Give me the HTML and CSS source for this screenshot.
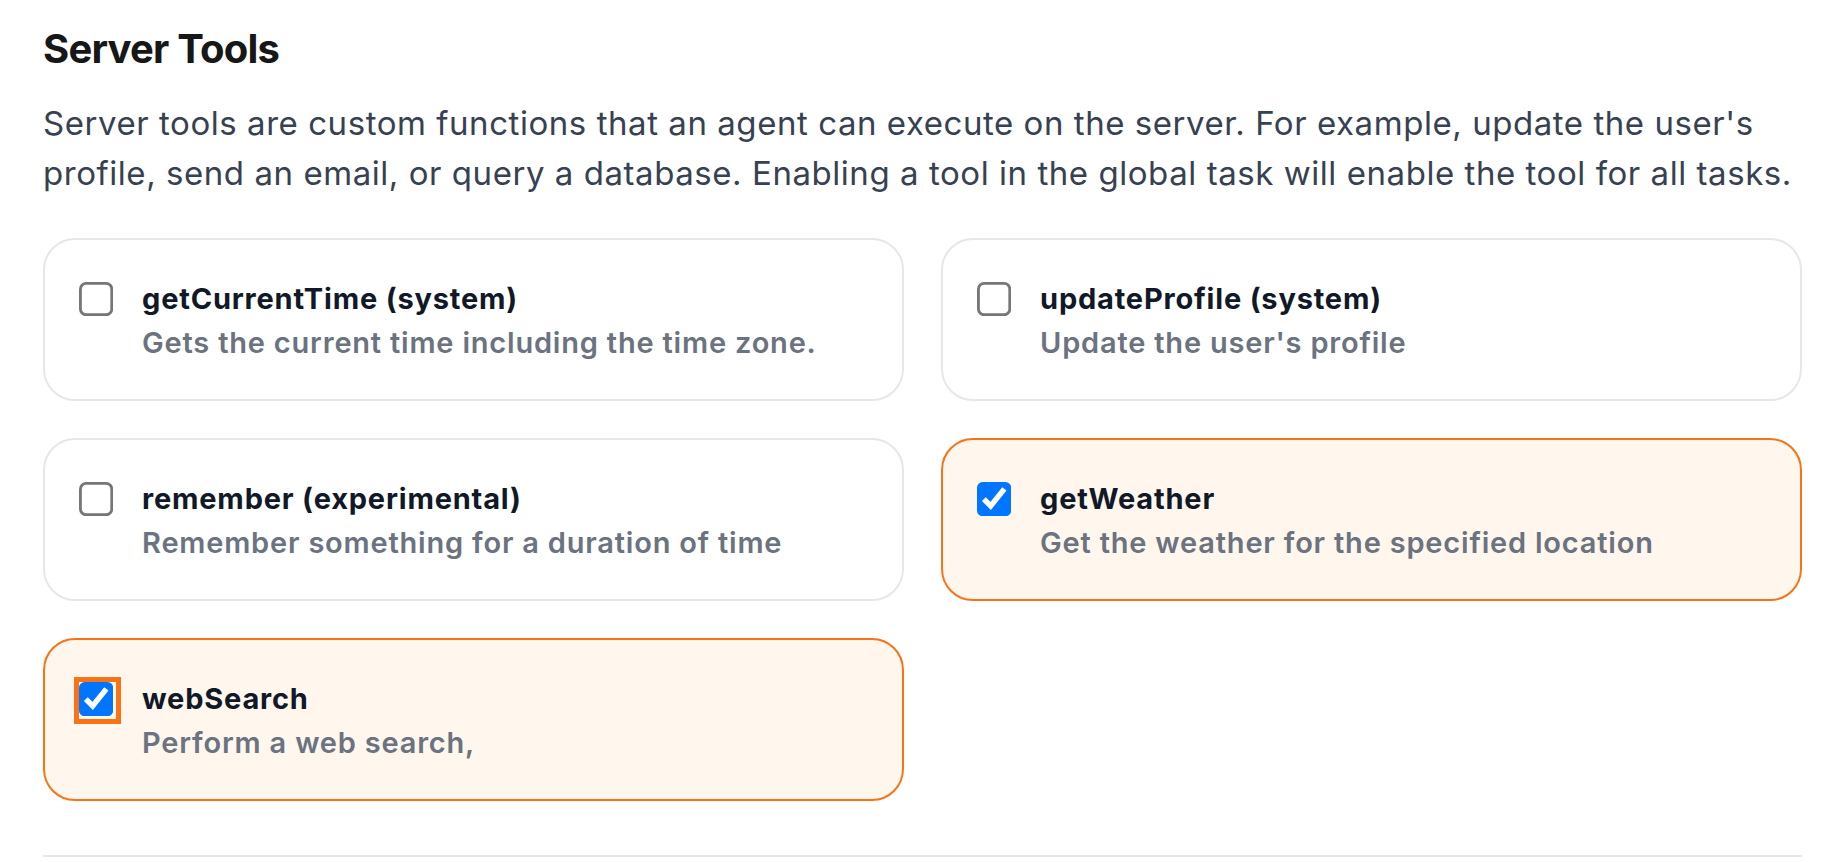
FILE: index.html
```html
<!DOCTYPE html>
<html lang="en">
<head>
<meta charset="utf-8">
<title>Server Tools</title>
<link rel="stylesheet" href="styles.css">
</head>
<body>
<section class="tools">
  <h2 class="tools-title">Server Tools</h2>
  <p class="tools-lead">Server tools are custom functions that an agent can execute on the server. For example, update the user's profile, send an email, or query a database. Enabling a tool in the global task will enable the tool for all tasks.</p>
  <div class="tool-grid">
    <label class="tool-card">
      <input type="checkbox" class="tool-check">
      <span class="tool-text">
        <span class="tool-name">getCurrentTime (system)</span>
        <span class="tool-desc">Gets the current time including the time zone.</span>
      </span>
    </label>
    <label class="tool-card">
      <input type="checkbox" class="tool-check">
      <span class="tool-text">
        <span class="tool-name">updateProfile (system)</span>
        <span class="tool-desc">Update the user's profile</span>
      </span>
    </label>
    <label class="tool-card">
      <input type="checkbox" class="tool-check">
      <span class="tool-text">
        <span class="tool-name">remember (experimental)</span>
        <span class="tool-desc">Remember something for a duration of time</span>
      </span>
    </label>
    <label class="tool-card is-on">
      <input type="checkbox" class="tool-check" checked>
      <span class="tool-text">
        <span class="tool-name">getWeather</span>
        <span class="tool-desc">Get the weather for the specified location</span>
      </span>
    </label>
    <label class="tool-card is-on">
      <input type="checkbox" class="tool-check is-focused" checked>
      <span class="tool-text">
        <span class="tool-name">webSearch</span>
        <span class="tool-desc">Perform a web search,</span>
      </span>
    </label>
  </div>
  <hr class="tools-divider">
</section>
</body>
</html>
```
FILE: styles.css
```css
html, body {
  margin: 0;
  padding: 0;
  background: #ffffff;
}

body {
  font-family: "Inter", "Noto Sans", sans-serif;
}

.tools {
  padding: 21px 34px 0 43px;
}

.tools-title {
  margin: 0;
  font-size: 40px;
  line-height: 56px;
  font-weight: 700;
  color: #171717;
  letter-spacing: -0.8px;
}

.tools-lead {
  margin: 22px 0 0;
  font-size: 33px;
  line-height: 49.5px;
  font-weight: 400;
  color: #374151;
  letter-spacing: 0.55px;
}

.tool-grid {
  margin-top: 40px;
  display: grid;
  grid-template-columns: 1fr 1fr;
  column-gap: 37px;
  row-gap: 37px;
}

.tool-card {
  display: flex;
  align-items: flex-start;
  gap: 26px;
  height: 163px;
  box-sizing: border-box;
  padding: 37px 36px 34px 34px;
  border: 2px solid #e5e7eb;
  border-radius: 32px;
  background: #ffffff;
  cursor: pointer;
}

.tool-card.is-on {
  background: #fff7ed;
  border-color: #f97316;
}

.tool-check {
  flex: none;
  width: 13px;
  height: 13px;
  margin: 1.7px 0 0 0;
  zoom: 2.85;
}

.tool-check.is-focused {
  outline: 1.8px solid #f97316;
  outline-offset: 0;
}

.tool-text {
  display: flex;
  flex-direction: column;
}

.tool-name {
  font-size: 29px;
  line-height: 44px;
  font-weight: 700;
  color: #111827;
  letter-spacing: 0.8px;
}

.tool-desc {
  font-size: 29px;
  line-height: 44px;
  font-weight: 600;
  color: #6b7280;
  letter-spacing: 0.8px;
}

.tools-divider {
  margin: 54px 0 0;
  border: 0;
  height: 2px;
  background: #e5e7eb;
}
```
